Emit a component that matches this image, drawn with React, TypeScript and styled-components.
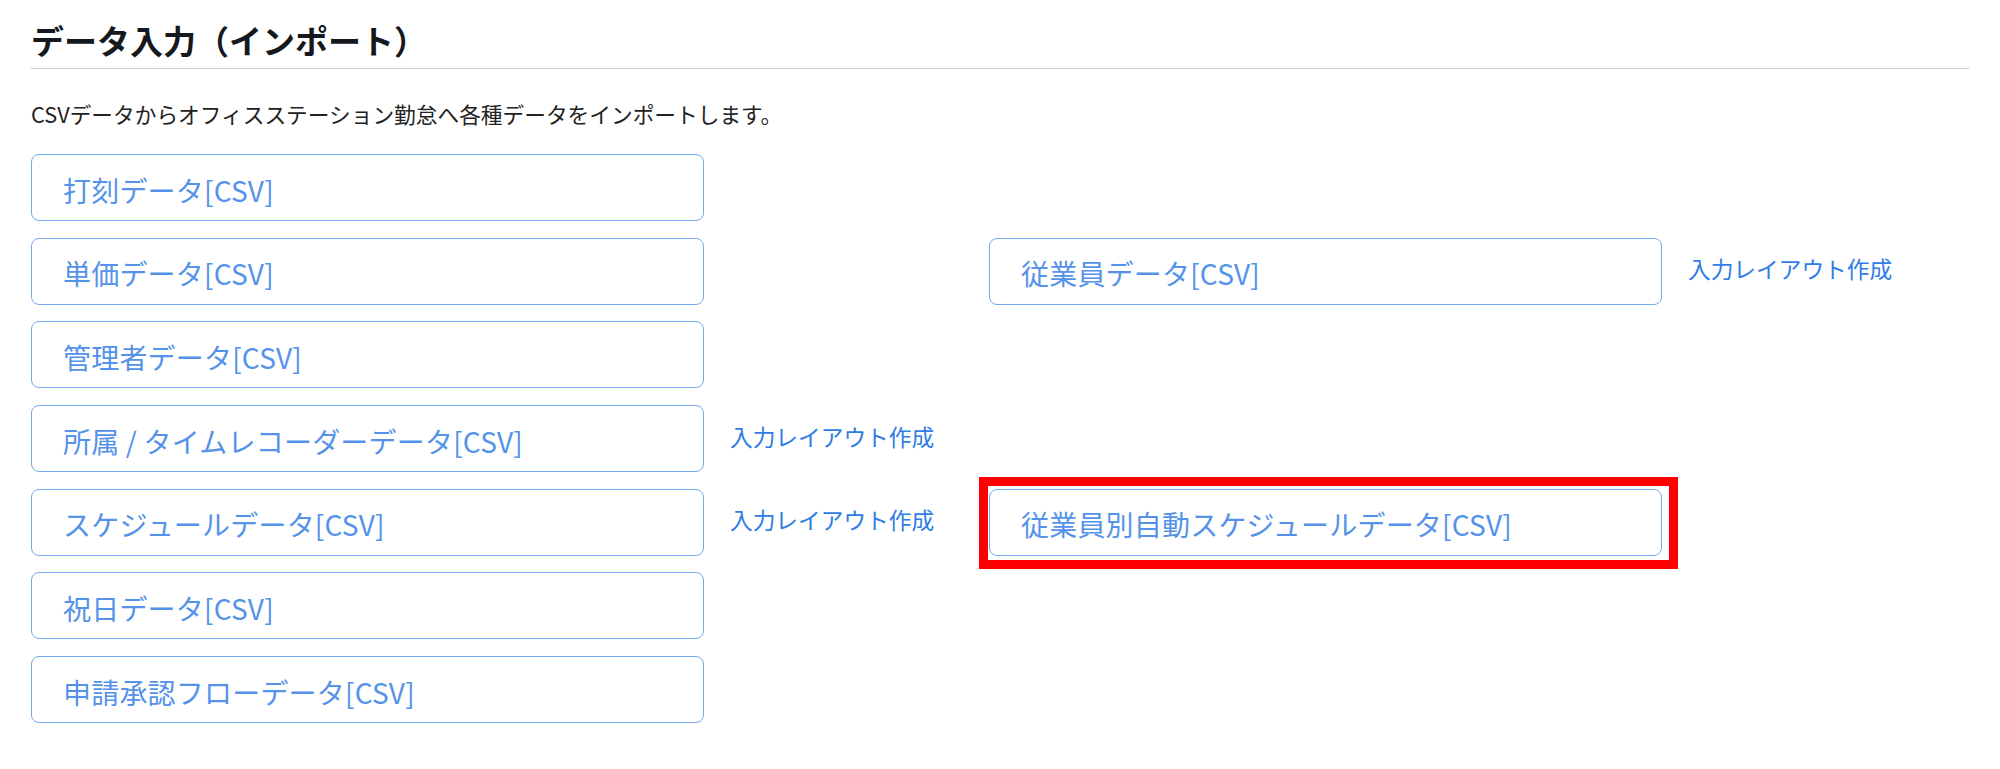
import React from 'react';
import styled, { createGlobalStyle } from 'styled-components';

const GlobalStyle = createGlobalStyle`
  html, body {
    margin: 0;
    padding: 0;
    background: #ffffff;
  }
  body {
    font-family: "Noto Sans CJK JP", "Noto Sans", sans-serif;
    color: #1d1f22;
  }
`;

const Page = styled.div`
  padding: 21px 31px 0 31px;
`;

const Title = styled.h2`
  margin: 0;
  padding-bottom: 9px;
  font-size: 33px;
  line-height: 38px;
  font-weight: 700;
  color: #15181c;
  border-bottom: 1px solid #c9c9c9;
`;

const Lead = styled.p`
  margin: 30px 0 0 0;
  font-size: 21.7px;
  line-height: 30px;
  color: #222;
`;

const ImportGrid = styled.div`
  display: grid;
  grid-template-columns: 958px 1fr;
  row-gap: 16.7px;
  margin-top: 25px;
`;

const Cell = styled.div`
  display: flex;
  align-items: center;
  gap: 26px;
  height: 67px;
`;

const ButtonWrap = styled.div`
  position: relative;
  display: flex;
`;

const ImportButton = styled.button`
  box-sizing: border-box;
  width: 673px;
  height: 67px;
  padding: 4px 0 0 31px;
  text-align: left;
  background: #ffffff;
  border: 1px solid #74a8ef;
  border-radius: 8px;
  font-family: "Noto Sans CJK JP", "Noto Sans", sans-serif;
  font-size: 28px;
  letter-spacing: 0.2px;
  color: #5592e9;
  cursor: pointer;
`;

const LayoutLink = styled.a`
  font-size: 22.7px;
  line-height: 30px;
  color: #2f7ce4;
  text-decoration: none;
  margin-top: -4px;
  cursor: pointer;
`;

const Highlight = styled.div`
  position: absolute;
  top: -12px;
  left: -10px;
  right: -16px;
  bottom: -13px;
  border: 9px solid #ff0000;
  pointer-events: none;
`;

type Item = { label: string; layout?: boolean; highlight?: boolean };
type Row = { left?: Item; right?: Item };

const rows: Row[] = [
  { left: { label: '打刻データ[CSV]' } },
  { left: { label: '単価データ[CSV]' }, right: { label: '従業員データ[CSV]', layout: true } },
  { left: { label: '管理者データ[CSV]' } },
  { left: { label: '所属 / タイムレコーダーデータ[CSV]', layout: true } },
  {
    left: { label: 'スケジュールデータ[CSV]', layout: true },
    right: { label: '従業員別自動スケジュールデータ[CSV]', highlight: true },
  },
  { left: { label: '祝日データ[CSV]' } },
  { left: { label: '申請承認フローデータ[CSV]' } },
];

const ImportCell: React.FC<{ item?: Item }> = ({ item }) => {
  if (!item) return <Cell />;
  return (
    <Cell>
      <ButtonWrap>
        <ImportButton type="button">{item.label}</ImportButton>
        {item.highlight && <Highlight />}
      </ButtonWrap>
      {item.layout && <LayoutLink>入力レイアウト作成</LayoutLink>}
    </Cell>
  );
};

export default function App() {
  return (
    <Page>
      <GlobalStyle />
      <Title>データ入力（インポート）</Title>
      <Lead>CSVデータからオフィスステーション勤怠へ各種データをインポートします。</Lead>
      <ImportGrid>
        {rows.map((row, i) => (
          <React.Fragment key={i}>
            <ImportCell item={row.left} />
            <ImportCell item={row.right} />
          </React.Fragment>
        ))}
      </ImportGrid>
    </Page>
  );
}
